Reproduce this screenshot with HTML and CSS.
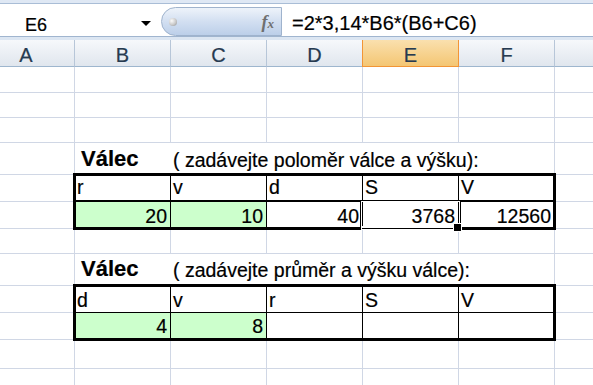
FILE: index.html
```html
<!DOCTYPE html>
<html lang="cs">
<head>
<meta charset="utf-8">
<title>Válec</title>
<link rel="stylesheet" href="styles.css">
</head>
<body>
<div class="topband"></div>
<div class="fbar">
  <div class="namebox"><span>E6</span><span class="arrow"></span></div>
  <div class="fxpill"><span class="dot"></span><span class="fx">f<span class="x">x</span></span></div>
  <div class="formula">=2*3,14*B6*(B6+C6)</div>
</div>
<div class="gap"></div>
<div class="sheet">
  <div class="row hrow">
    <div class="c hc a">A</div><div class="c hc">B</div><div class="c hc">C</div><div class="c hc">D</div><div class="c hc sel">E</div><div class="c hc">F</div><div class="c hc g"></div>
  </div>
  <div class="row h26">
    <div class="c a"></div><div class="c"></div><div class="c"></div><div class="c"></div><div class="c"></div><div class="c"></div><div class="c g"></div>
  </div>
  <div class="row h25">
    <div class="c a"></div><div class="c"></div><div class="c"></div><div class="c"></div><div class="c"></div><div class="c"></div><div class="c g"></div>
  </div>
  <div class="row h25">
    <div class="c a"></div><div class="c"></div><div class="c"></div><div class="c"></div><div class="c"></div><div class="c"></div><div class="c g"></div>
  </div>
  <div class="row h32 ttl">
    <div class="c a"></div><div class="c nob title"><span class="bold">Válec</span><span class="note">( zadávejte poloměr válce a výšku):</span></div><div class="c nob"></div><div class="c nob"></div><div class="c nob"></div><div class="c"></div><div class="c g"></div>
  </div>
  <div class="band">
    <div class="side"><div class="c a"></div><div class="c a"></div></div>
    <div class="tbl t1">
      <div class="c hd">r</div><div class="c hd">v</div><div class="c hd">d</div><div class="c hd">S</div><div class="c hd">V</div>
      <div class="c dt num grn">20</div><div class="c dt num grn">10</div><div class="c dt num">40</div><div class="c dt num act">3768</div><div class="c dt num">12560</div>
    </div>
    <div class="side sg"><div class="c g"></div><div class="c g"></div></div>
  </div>
  <div class="row h25">
    <div class="c a"></div><div class="c"></div><div class="c"></div><div class="c"></div><div class="c"></div><div class="c"></div><div class="c g"></div>
  </div>
  <div class="row h32 ttl2">
    <div class="c a"></div><div class="c nob title"><span class="bold">Válec</span><span class="note">( zadávejte průměr a výšku válce):</span></div><div class="c nob"></div><div class="c nob"></div><div class="c nob"></div><div class="c"></div><div class="c g"></div>
  </div>
  <div class="band">
    <div class="side"><div class="c a"></div><div class="c a"></div></div>
    <div class="tbl t2">
      <div class="c hd">d</div><div class="c hd">v</div><div class="c hd">r</div><div class="c hd">S</div><div class="c hd">V</div>
      <div class="c dt num grn">4</div><div class="c dt num grn">8</div><div class="c dt num"></div><div class="c dt num"></div><div class="c dt num"></div>
    </div>
    <div class="side sg"><div class="c g"></div><div class="c g"></div></div>
  </div>
  <div class="row h29">
    <div class="c a"></div><div class="c"></div><div class="c"></div><div class="c"></div><div class="c"></div><div class="c"></div><div class="c g"></div>
  </div>
  <div class="row h30">
    <div class="c a"></div><div class="c"></div><div class="c"></div><div class="c"></div><div class="c"></div><div class="c"></div><div class="c g"></div>
  </div>
</div>
</body>
</html>
```
FILE: styles.css
```css
* { box-sizing: border-box; }
body {
  margin: 0;
  width: 593px;
  height: 385px;
  overflow: hidden;
  background: #fff;
  color: #000;
  font-family: "Liberation Sans", Arial, sans-serif;
}
.topband { height: 3px; background: #dfe8f4; }
.fbar {
  display: flex;
  height: 34px;
  border-top: 1px solid #a9bdd6;
  border-bottom: 1px solid #a0b5cf;
  background: #fff;
}
.namebox {
  width: 161px;
  flex: none;
  display: flex;
  align-items: flex-end;
  padding: 0 10px 2px 25px;
  font-size: 18px;
  line-height: 1;
  -webkit-text-stroke: 0.2px #000;
}
.namebox .arrow {
  margin-left: auto;
  margin-bottom: 8px;
  width: 0;
  height: 0;
  border-left: 5px solid transparent;
  border-right: 5px solid transparent;
  border-top: 5px solid #000;
}
.fxpill {
  width: 121px;
  flex: none;
  margin-top: 3px;
  display: flex;
  align-items: center;
  border: 1px solid #9fb3cd;
  border-radius: 15px 0 0 15px;
  background: linear-gradient(#eef3fa, #d2dff1 50%, #bccfe9);
}
.dot {
  width: 8px;
  height: 8px;
  margin-left: 7px;
  border-radius: 50%;
  background: radial-gradient(circle at 35% 35%, #fbfbfb, #c9c9c9 55%, #8e8e8e);
}
.fx {
  margin-left: auto;
  margin-right: 7px;
  font-family: "Liberation Serif", serif;
  font-style: italic;
  font-weight: bold;
  font-size: 18px;
  line-height: 1;
  color: #6f6f6f;
}
.fx .x { font-size: 13px; }
.formula {
  flex: 1;
  display: flex;
  align-items: flex-end;
  padding: 0 0 3px 10px;
  font-size: 20px;
  line-height: 1;
  -webkit-text-stroke: 0.2px #000;
}
.gap { height: 3px; background: #dce6f2; }

.row, .band { display: flex; }
.hrow { height: 27px; }
.h25 { height: 25px; }
.h26 { height: 26px; }
.h29 { height: 29px; }
.h30 { height: 30px; }
.h32 { height: 32px; }

.c {
  flex: none;
  width: 96px;
  height: 100%;
  display: flex;
  align-items: flex-end;
  border-right: 1px solid #d0d7e5;
  border-bottom: 1px solid #d0d7e5;
  font-size: 19.5px;
  line-height: 1;
  white-space: nowrap;
  -webkit-text-stroke: 0.2px #000;
}
.c.a { width: 75px; }
.c.g { flex: 1; width: auto; border-right: 0; }
.c.nob { border-right-color: transparent; }

.hc {
  justify-content: center;
  padding-bottom: 1px;
  font-size: 20px;
  color: #263a50;
  -webkit-text-stroke: 0.2px #263a50;
  background: linear-gradient(#f6f8fb, #e0e6ee);
  border-right-color: #b7c6d8;
  border-bottom-color: #9eb6ce;
}
.hc.a { padding-right: 22px; }
.hc.sel {
  background: linear-gradient(#fae0ae, #f4c673);
  border-right-color: #f29536;
  border-bottom-color: #f29536;
  box-shadow: -1px 0 0 #f29536;
}

.ttl .c { padding-bottom: 4px; }
.ttl2 .c { padding-bottom: 5px; }
.title { align-items: baseline; align-self: stretch; }
.title { display: flex; align-items: flex-end; }
.bold { font-weight: bold; font-size: 22px; padding-left: 6px; width: 96px; flex: none; }
.note { padding-left: 2px; }

.side { display: flex; flex-direction: column; }
.side .c { height: 27px; }
.sg { flex: 1; }
.sg .c { width: auto; }

.tbl {
  position: relative;
  display: grid;
  grid-template-columns: repeat(5, 96px);
  grid-template-rows: 27px 27px;
}
.tbl .c {
  height: auto;
  border-right-color: #000;
  border-bottom-color: #000;
}
.tbl::after {
  content: "";
  position: absolute;
  left: -2px;
  top: -2px;
  right: -1px;
  bottom: -1px;
  border: 3px solid #000;
  pointer-events: none;
}
.hd { padding-left: 2px; }
.t1 .hd { border-bottom-width: 2px; padding-bottom: 3px; }
.t1 .dt { padding-bottom: 2px; }
.t2 .hd { padding-bottom: 2px; }
.t2 .dt { padding-bottom: 3px; }
.num { justify-content: flex-end; padding-right: 3px; }
.grn { background: #ccffcc; }

.act { position: relative; }
.act::before {
  content: "";
  position: absolute;
  left: -3px;
  right: -3px;
  top: -2px;
  bottom: -2px;
  border: 1px solid #000;
  border-bottom: 0;
  box-shadow: inset 0 0 0 1px #fff;
  background: linear-gradient(to top, #fff 0 1px, #000 1px 2px, #fff 2px 4px, transparent 4px);
  z-index: 1;
}
.act::after {
  content: "";
  position: absolute;
  right: -4px;
  bottom: -4px;
  width: 7px;
  height: 7px;
  background: #000;
  border: 1px solid #fff;
  z-index: 2;
}
```
